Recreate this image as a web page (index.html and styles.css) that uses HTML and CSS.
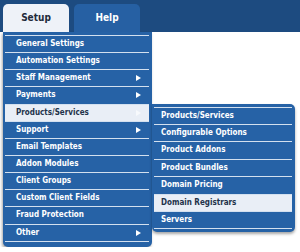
FILE: index.html
```html
<!DOCTYPE html>
<html lang="en">
<head>
    <meta charset="UTF-8">
    <meta name="viewport" content="width=device-width, initial-scale=1.0">
    <title>Setup Menu</title>
    <link rel="stylesheet" href="styles.css">
</head>
<body>
    <div class="navbar">
        <a class="tab active" href="#">Setup</a>
        <a class="tab" href="#">Help</a>
    </div>

    <ul class="menu">
        <li>General Settings</li>
        <li>Automation Settings</li>
        <li class="sub">Staff Management</li>
        <li class="sub">Payments</li>
        <li class="sub hover">Products/Services
            <ul class="submenu">
                <li>Products/Services</li>
                <li>Configurable Options</li>
                <li>Product Addons</li>
                <li>Product Bundles</li>
                <li>Domain Pricing</li>
                <li class="hover">Domain Registrars</li>
                <li>Servers</li>
            </ul>
        </li>
        <li class="sub">Support</li>
        <li>Email Templates</li>
        <li>Addon Modules</li>
        <li>Client Groups</li>
        <li>Custom Client Fields</li>
        <li>Fraud Protection</li>
        <li class="sub">Other</li>
    </ul>
</body>
</html>
```

FILE: styles.css
```css
body { margin: 0; background: #fff; font-family: "DejaVu Sans Condensed", "DejaVu Sans", sans-serif; }
.navbar { display: flex; gap: 5px; height: 28px; padding: 4px 0 0 3px; background: #1d4b80; }
.tab { width: 66px; height: 28px; line-height: 28px; text-align: center; border-radius: 5px 5px 0 0; background: #2660a3; color: #fff; font-size: 10px; font-weight: bold; text-decoration: none; }
.tab.active { background: #eef2f8; color: #1f2b3a; }

.menu { list-style: none; margin: 0 0 0 3px; padding: 3px 3px 5px 2px; width: 144px; background: #2662a6; border-radius: 0 0 5px 5px; box-shadow: -1px 2px 3px rgba(0, 0, 0, 0.35); }
.menu li { position: relative; box-sizing: border-box; height: 17.15px; line-height: 16px; padding-left: 11px; border-top: 1px solid #d3e0ef; color: #fff; font-size: 8px; font-weight: bold; }
.menu > li:last-child { border-bottom: 1px solid #d3e0ef; height: 18.15px; }
.menu li.sub::after { content: ""; position: absolute; right: 8px; top: 5px; border-left: 5px solid #fff; border-top: 3px solid transparent; border-bottom: 3px solid transparent; }
.menu li.hover { background: #e9eef6; color: #22324a; }
.menu li.hover.sub::after { border-left-color: #f7f9fc; }

.submenu { list-style: none; position: absolute; left: 147px; top: -1px; width: 138px; margin: 0; padding: 3px 3px 3px 2px; background: #2662a6; border-radius: 0 5px 5px 5px; box-shadow: 0 2px 3px rgba(0, 0, 0, 0.35); }
.submenu li { height: 17.4px; padding-left: 7px; }
.submenu li:last-child { border-bottom: 1px solid #d3e0ef; height: 18.4px; }
```
